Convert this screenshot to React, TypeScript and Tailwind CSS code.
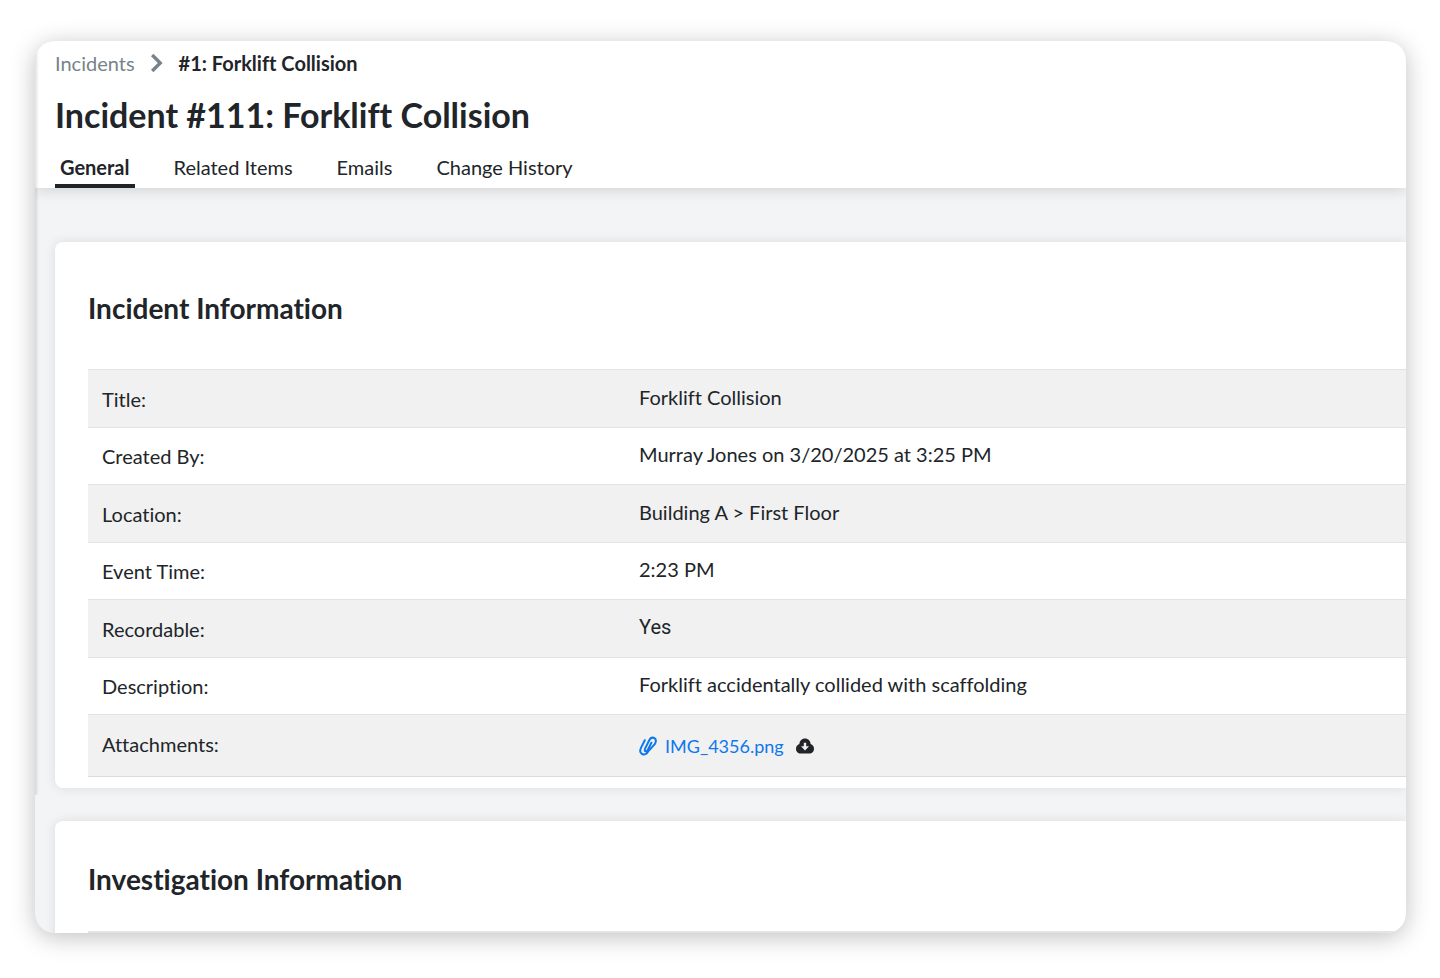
import React, { useState } from 'react';

interface Field {
  label: string;
  value: React.ReactNode;
}

const tabs = ['General', 'Related Items', 'Emails', 'Change History'];

const PaperclipIcon = () => (
  <svg viewBox="0 0 18 20" className="h-5 w-[18px]" fill="none" stroke="currentColor" strokeWidth="2" strokeLinecap="round" strokeLinejoin="round" aria-hidden="true">
    <path d="M5.800 4.200 2.100 11.600c-1.400 2.900-1 5.400 1 6.400 2.200 1.100 4.800.1 6.300-2.900L16 7.800c1.300-2.700 1-4.900-.8-5.800-1.900-.9-3.900.1-5.100 2.500L6.200 12.400c-.7 1.500-.6 2.400.2 2.800.9.400 1.800-.1 2.500-1.500L12.400 6.700" />
  </svg>
);

const CloudDownloadIcon = () => (
  <svg viewBox="0 0 18 16" className="h-4 w-[18px]" aria-hidden="true">
    <path fill="currentColor" d="M9 0.500c-3.200 0-5.500 2.400-5.600 5.600C1.400 6.700 0 8.500 0 10.700c0 2.700 2 4.800 4.700 4.800h8.600c2.700 0 4.700-2.100 4.700-4.800 0-2.200-1.400-4-3.400-4.600C14.500 2.900 12.200.5 9 .5Z" />
    <path fill="#f1f1f1" d="M7.800 4.800h2.400V8.200h2.800L9 12.600 5 8.200H7.800Z" />
  </svg>
);

const fields: Field[] = [
  { label: 'Title:', value: 'Forklift Collision' },
  { label: 'Created By:', value: 'Murray Jones on 3/20/2025 at 3:25 PM' },
  { label: 'Location:', value: 'Building A > First Floor' },
  { label: 'Event Time:', value: '2:23 PM' },
  { label: 'Recordable:', value: <span className="font-[Roboto,sans-serif]">Yes</span> },
  { label: 'Description:', value: 'Forklift accidentally collided with scaffolding' },
];

const App: React.FC = () => {
  const [activeTab, setActiveTab] = useState('General');

  return (
    <div className="h-screen bg-white pt-[41px] pr-[34px] pb-[45px] pl-[35px] font-[Lato,sans-serif] text-xl leading-6 text-[#212529] [font-variant-ligatures:none]">
      <div className="relative flex h-full flex-col overflow-hidden rounded-[20px] bg-[#f2f4f6] shadow-[0_4px_24px_rgba(0,0,0,0.25)]">
        <div className="pointer-events-none absolute top-0 left-0 z-20 h-[754px] w-1 rounded-br bg-linear-to-r from-black/12 to-transparent" />

        {/* Header */}
        <header className="relative z-10 shrink-0 bg-white px-5 pt-[10px] shadow-[0_2px_14px_rgba(0,0,0,0.14)]">
          <nav aria-label="Breadcrumb" className="flex items-center">
            <a href="#incidents" className="text-[#77838a]">Incidents</a>
            <svg viewBox="0 0 14 20" className="mx-[15px] h-5 w-[14px]" fill="none" stroke="#77838a" strokeWidth="3.4" aria-hidden="true">
              <path d="m2.200 2 8 8-8 8" />
            </svg>
            <span className="font-bold">#1: Forklift Collision</span>
          </nav>
          <h1 className="mt-5 text-[34px] leading-10 font-bold">Incident #111: Forklift Collision</h1>
          <div role="tablist" className="mt-[17px] flex gap-[34px]">
            {tabs.map(tab => (
              <button
                key={tab}
                role="tab"
                aria-selected={tab === activeTab}
                onClick={() => setActiveTab(tab)}
                className={`h-9 border-b-4 px-[5px] pb-[2px] ${
                  tab === activeTab ? 'border-[#212529] font-bold' : 'border-transparent'
                }`}
              >
                {tab}
              </button>
            ))}
          </div>
        </header>

        {/* Sections */}
        <main className="flex flex-col gap-[33px] pt-[54px] pl-5">
          <section className="rounded-l-lg bg-white pb-[11px] pl-[33px] shadow-[0_0_12px_rgba(0,0,0,0.1)]">
            <h2 className="pt-12 text-[28px] leading-9 font-bold">Incident Information</h2>
            <table className="mt-[43px] w-full table-fixed border-collapse">
              <tbody>
                {fields.map(field => (
                  <tr key={field.label} className="h-[58px] border-y border-[#e2e3e4] odd:bg-[#f1f1f1] even:h-[57px]">
                    <th scope="row" className="w-[537px] px-[14px] text-left font-normal">{field.label}</th>
                    <td className="px-[14px] pb-1">{field.value}</td>
                  </tr>
                ))}
                <tr className="h-[62px] border-y border-[#d9dbdd] bg-[#f1f1f1]">
                  <th scope="row" className="px-[14px] pb-1 text-left font-normal">Attachments:</th>
                  <td className="px-[14px]">
                    <div className="flex items-center text-lg">
                      <a href="#attachment" className="flex items-center gap-2 text-[#0d78ee]">
                        <PaperclipIcon />
                        IMG_4356.png
                      </a>
                      <button aria-label="Download IMG_4356.png" className="ml-3">
                        <CloudDownloadIcon />
                      </button>
                    </div>
                  </td>
                </tr>
              </tbody>
            </table>
          </section>

          <section className="rounded-l-lg bg-white pl-[33px] shadow-[0_0_12px_rgba(0,0,0,0.1)]">
            <h2 className="pt-10 text-[28px] leading-9 font-bold">Investigation Information</h2>
            <div className="mt-[34px] h-12 border-t-2 border-[#e2e3e4] bg-[#f1f1f1]" />
          </section>
        </main>
      </div>
    </div>
  );
};

export default App;
